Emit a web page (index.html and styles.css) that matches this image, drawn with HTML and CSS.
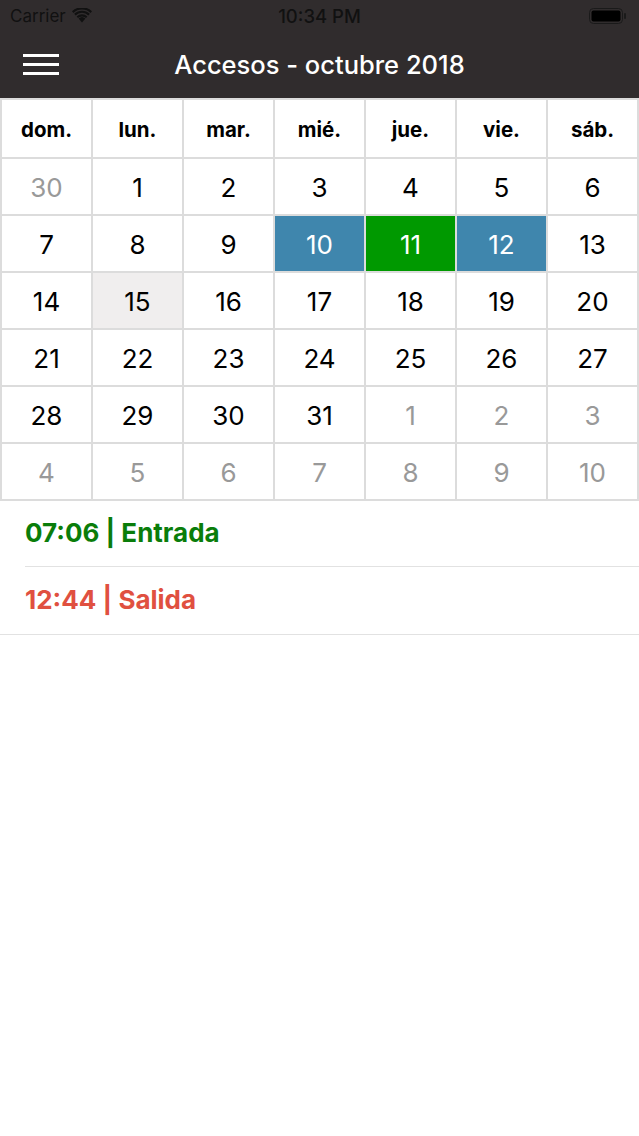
FILE: index.html
```html
<!DOCTYPE html>
<html lang="es">
<head>
    <meta charset="UTF-8">
    <meta name="viewport" content="width=device-width, initial-scale=1.0">
    <title>Accesos - octubre 2018</title>
    <link rel="stylesheet" href="styles.css">
</head>
<body>
    <div class="topbar">
        <div class="status-bar">
            <div class="carrier">
                Carrier
                <svg class="wifi" width="20" height="15" viewBox="0 0 20 15">
                    <path d="M10 14.5 L6.6 10.6 A5 5 0 0 1 13.4 10.6 Z" fill="#111"/>
                    <path d="M4.6 8.4 A7.8 7.8 0 0 1 15.4 8.4 L14 10 A5.8 5.8 0 0 0 6 10 Z" fill="#111"/>
                    <path d="M2.2 5.8 A11.2 11.2 0 0 1 17.8 5.8 L16.4 7.4 A9.2 9.2 0 0 0 3.6 7.4 Z" fill="#111"/>
                    <path d="M0 3.3 A14.4 14.4 0 0 1 20 3.3 L18.6 4.9 A12.4 12.4 0 0 0 1.4 4.9 Z" fill="#111"/>
                </svg>
            </div>
            <div class="clock">10:34 PM</div>
            <div class="battery">
                <svg width="38" height="16" viewBox="0 0 38 16">
                    <rect x="0.5" y="0.5" width="33" height="15" rx="4" fill="none" stroke="#1a1a1a" stroke-width="1"/>
                    <rect x="2.5" y="2.5" width="29" height="11" rx="2" fill="#000"/>
                    <rect x="35" y="5" width="2" height="6" rx="1" fill="#1a1a1a"/>
                </svg>
            </div>
        </div>
        <div class="nav-bar">
            <div class="menu-btn">
                <span></span><span></span><span></span>
            </div>
            <div class="nav-title">Accesos - octubre 2018</div>
        </div>
    </div>

    <div class="calendar">
        <div class="day-name">dom.</div>
        <div class="day-name">lun.</div>
        <div class="day-name">mar.</div>
        <div class="day-name">mié.</div>
        <div class="day-name">jue.</div>
        <div class="day-name">vie.</div>
        <div class="day-name">sáb.</div>

        <div class="day other">30</div>
        <div class="day">1</div>
        <div class="day">2</div>
        <div class="day">3</div>
        <div class="day">4</div>
        <div class="day">5</div>
        <div class="day">6</div>

        <div class="day">7</div>
        <div class="day">8</div>
        <div class="day">9</div>
        <div class="day week">10</div>
        <div class="day selected">11</div>
        <div class="day week">12</div>
        <div class="day">13</div>

        <div class="day">14</div>
        <div class="day today">15</div>
        <div class="day">16</div>
        <div class="day">17</div>
        <div class="day">18</div>
        <div class="day">19</div>
        <div class="day">20</div>

        <div class="day">21</div>
        <div class="day">22</div>
        <div class="day">23</div>
        <div class="day">24</div>
        <div class="day">25</div>
        <div class="day">26</div>
        <div class="day">27</div>

        <div class="day">28</div>
        <div class="day">29</div>
        <div class="day">30</div>
        <div class="day">31</div>
        <div class="day other">1</div>
        <div class="day other">2</div>
        <div class="day other">3</div>

        <div class="day other">4</div>
        <div class="day other">5</div>
        <div class="day other">6</div>
        <div class="day other">7</div>
        <div class="day other">8</div>
        <div class="day other">9</div>
        <div class="day other">10</div>
    </div>

    <ul class="access-list">
        <li class="access entrada">07:06 | Entrada</li>
        <li class="access salida">12:44 | Salida</li>
    </ul>
</body>
</html>
```

FILE: styles.css
```css
* {
    box-sizing: border-box;
}

body {
    margin: 0;
    font-family: Inter, 'Liberation Sans', sans-serif;
    background: #ffffff;
    color: #000;
}

.topbar {
    background: #302c2d;
}

.status-bar {
    height: 32px;
    display: flex;
    align-items: center;
    justify-content: space-between;
    padding: 0 10px;
    color: #111;
    font-size: 17px;
    position: relative;
}

.carrier {
    display: flex;
    align-items: center;
    gap: 6px;
}

.wifi {
    margin-top: -2px;
}

.clock {
    position: absolute;
    left: 0;
    right: 0;
    text-align: center;
    font-size: 18.5px;
    font-weight: 500;
    pointer-events: none;
}

.battery {
    display: flex;
    align-items: center;
    margin-right: 2px;
}

.nav-bar {
    height: 66px;
    display: flex;
    align-items: center;
    position: relative;
}

.menu-btn {
    margin-left: 23px;
    width: 36px;
    display: flex;
    flex-direction: column;
    gap: 6px;
    margin-top: -2px;
}

.menu-btn span {
    display: block;
    height: 3px;
    background: #fff;
}

.nav-title {
    position: absolute;
    left: 0;
    right: 0;
    text-align: center;
    color: #fff;
    font-size: 25.5px;
    font-weight: 500;
    margin-top: -1px;
    pointer-events: none;
}

.calendar {
    display: grid;
    grid-template-columns: repeat(7, 1fr);
    grid-template-rows: 57px repeat(6, 55px);
    gap: 2px;
    padding: 2px;
    background: #dcdcdc;
}

.day-name,
.day {
    background: #fff;
    display: flex;
    align-items: center;
    justify-content: center;
}

.day-name {
    font-size: 20.5px;
    font-weight: 700;
    padding-top: 2px;
}

.day {
    font-size: 26px;
    padding-top: 1px;
}

.day.other {
    color: #999;
}

.day.week {
    background: #3f86ad;
    color: #fff;
}

.day.selected {
    background: #009900;
    color: #fff;
}

.day.today {
    background: #f0eeee;
}

.access-list {
    list-style: none;
    margin: 0;
    padding: 0 0 0 25px;
}

.access {
    height: 68px;
    display: flex;
    align-items: center;
    font-size: 26px;
    font-weight: 700;
    border-bottom: 1px solid #e2e2e2;
    padding-bottom: 2px;
}

.access:first-child {
    height: 66px;
}

.access:last-child {
    margin-left: -25px;
    padding-left: 25px;
}

.entrada {
    color: #0a7d0a;
}

.salida {
    color: #e05040;
}
```
